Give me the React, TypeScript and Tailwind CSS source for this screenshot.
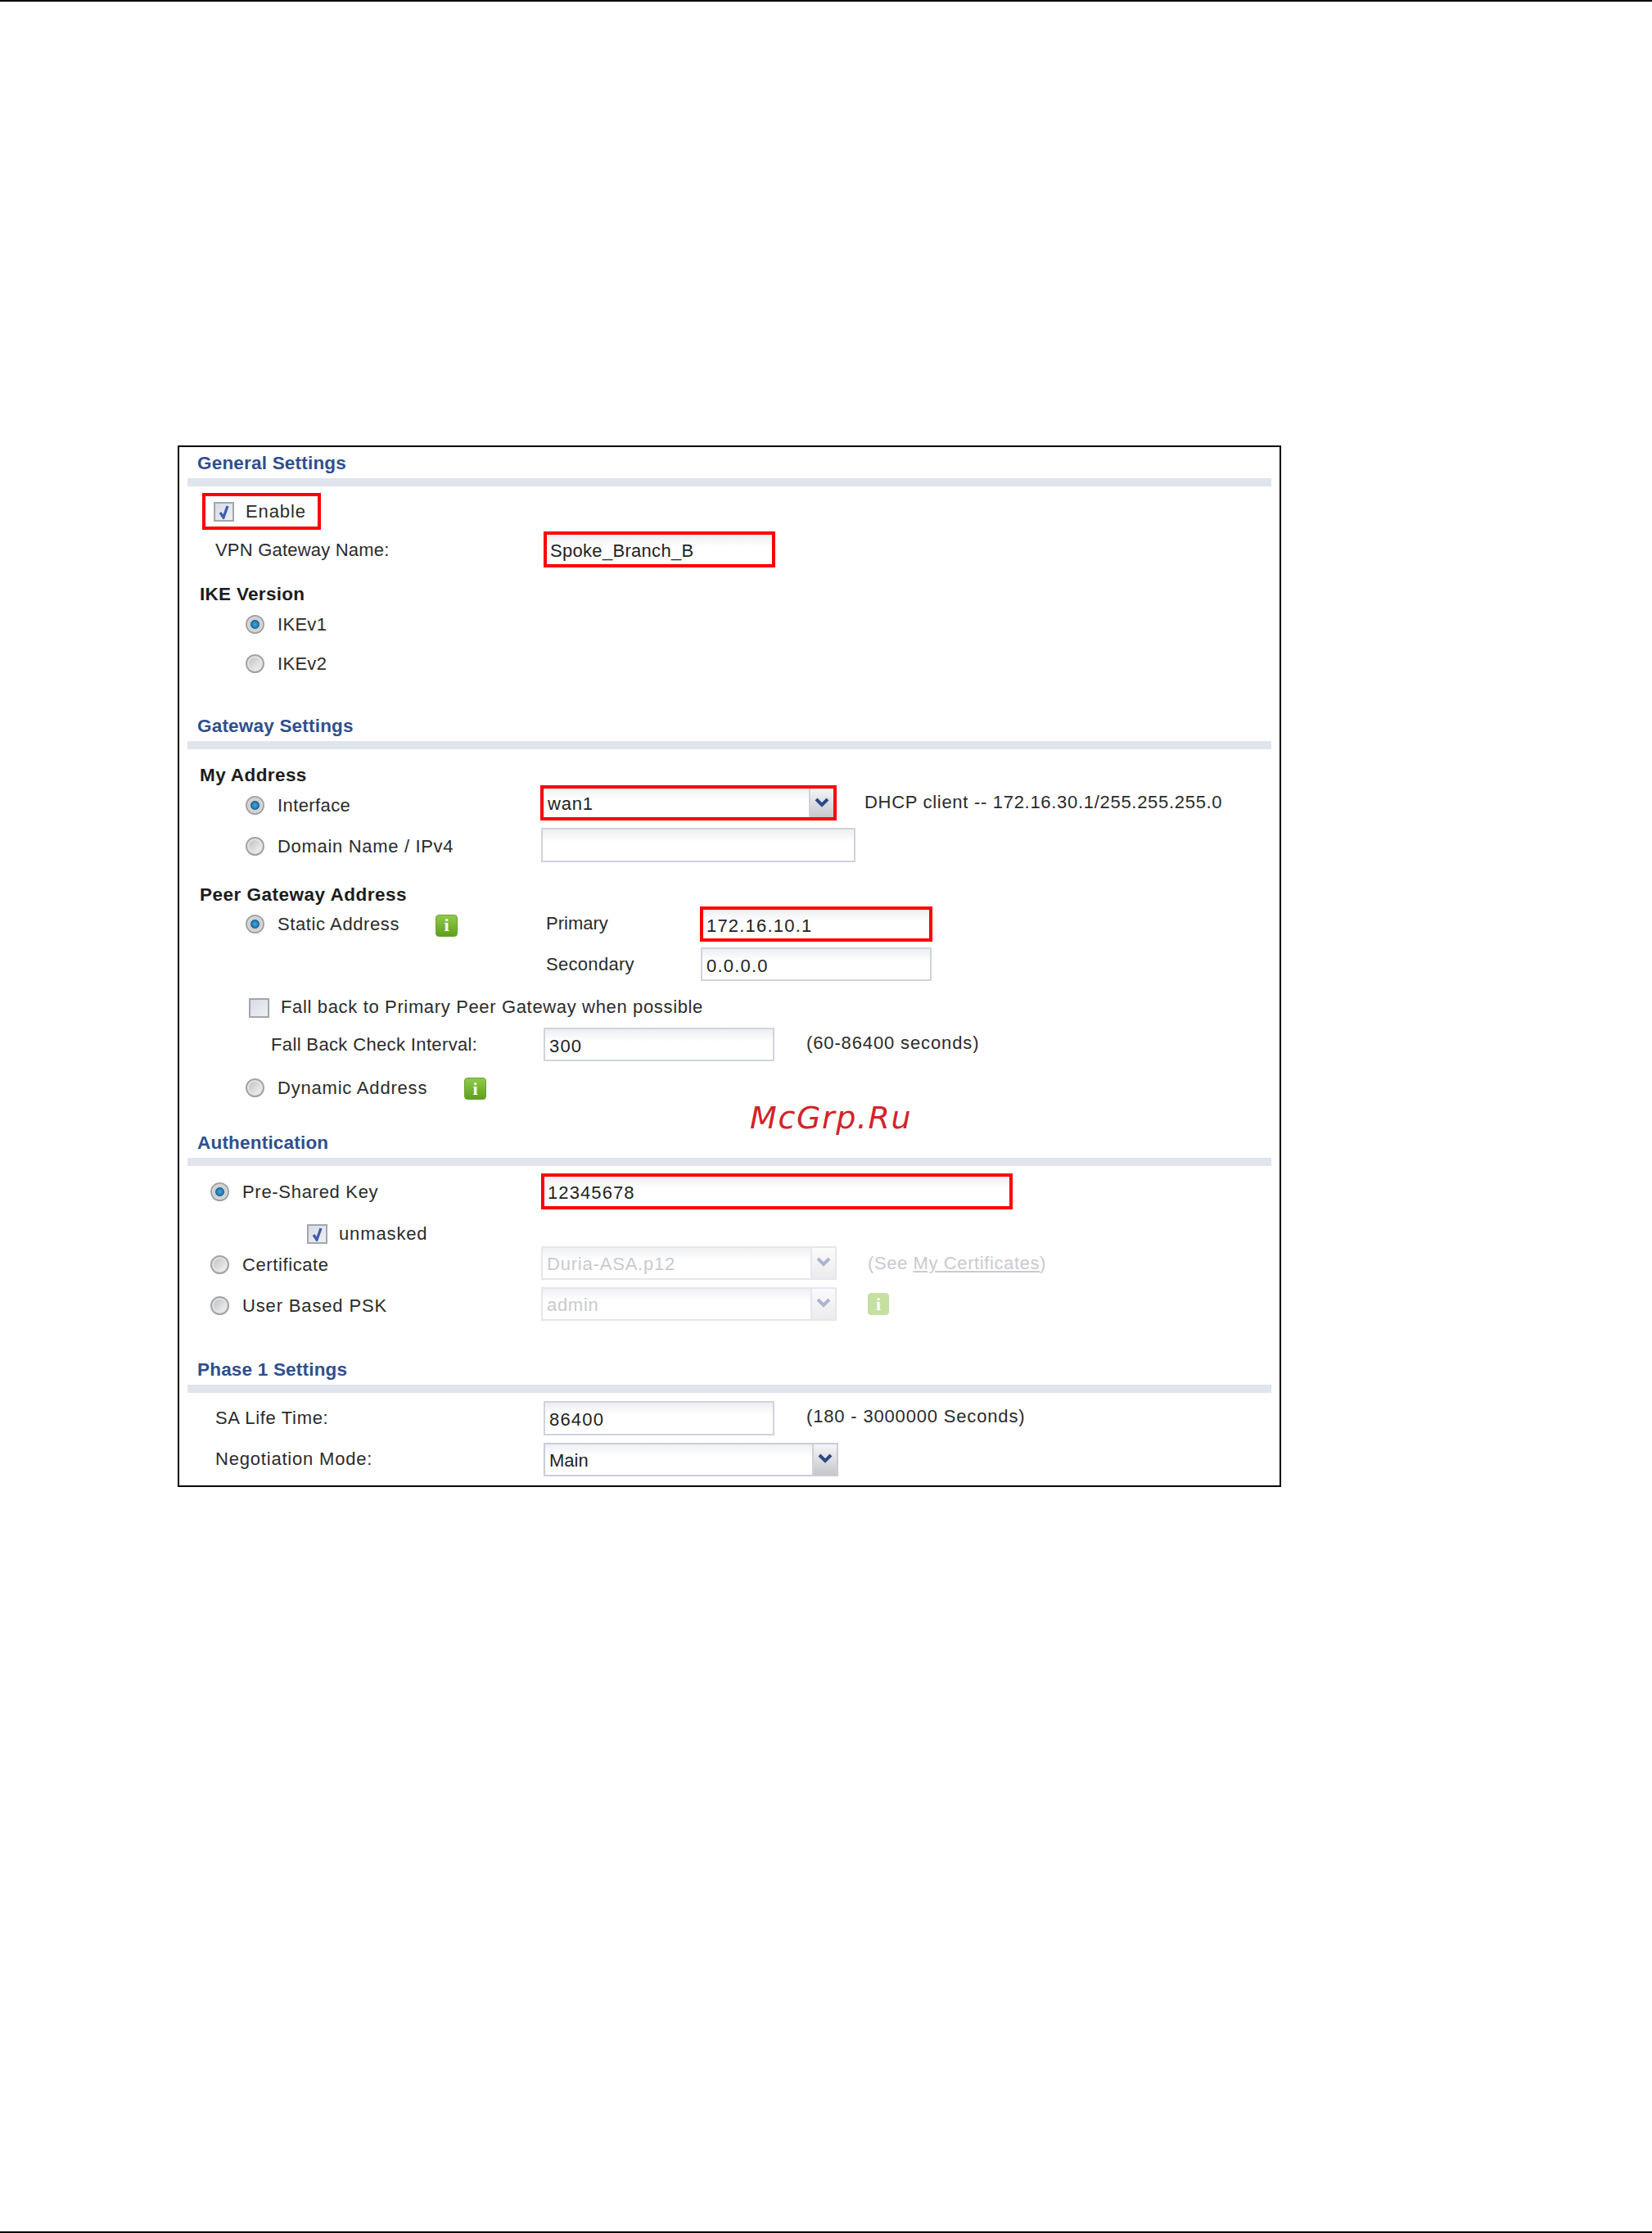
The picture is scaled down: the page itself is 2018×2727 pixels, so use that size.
import type { ReactNode } from "react"

function Radio({ checked = false }: { checked?: boolean }) {
  return (
    <span className="flex h-[23px] w-[23px] shrink-0 items-center justify-center rounded-full border-[2px] border-[#a1a4a6] bg-[#e4e4e5]">
      {checked ? (
        <span className="flex h-[17px] w-[17px] items-center justify-center rounded-full bg-[#cfd0d2]">
          <span className="h-[11px] w-[11px] rounded-full border border-[#174f78] bg-radial from-[#3fa6e0] to-[#0f659e]" />
        </span>
      ) : (
        <span className="h-[15px] w-[15px] rounded-full bg-linear-to-br from-[#bfc1c4] to-[#f4f4f5]" />
      )}
    </span>
  )
}

function Checkbox({ checked = false }: { checked?: boolean }) {
  return (
    <span className="flex h-[24px] w-[25px] shrink-0 items-center justify-center border-[2px] border-[#a3a6aa] bg-linear-to-br from-[#d9dce6] to-[#eef0f5]">
      {checked && (
        <svg width="14" height="18" viewBox="0 0 14 18" fill="none">
          <path d="M2 10 L6 16 L11 2" stroke="#3e5cab" strokeWidth="3.2" />
        </svg>
      )}
    </span>
  )
}

function InfoIcon({ faded = false }: { faded?: boolean }) {
  return (
    <span
      className={
        faded
          ? "flex h-[27px] w-[26px] shrink-0 items-center justify-center rounded-[4px] border border-[#c6dda8] bg-[#c5e09f] font-['Liberation_Serif',serif] text-[22px] leading-none font-bold text-white"
          : "flex h-[27px] w-[27px] shrink-0 items-center justify-center rounded-[4px] border border-[#6ba32c] bg-linear-to-b from-[#90c94a] to-[#5fa01e] font-['Liberation_Serif',serif] text-[22px] leading-none font-bold text-white"
      }
    >
      i
    </span>
  )
}

function Chevron({ color }: { color: string }) {
  return (
    <svg width="18" height="12" viewBox="0 0 18 12" fill="none">
      <path d="M2 2 L9 9 L16 2" stroke={color} strokeWidth="4" />
    </svg>
  )
}

function TextBox({
  value,
  width,
  red = false,
  tracking = "",
}: {
  value?: string
  width: string
  red?: boolean
  tracking?: string
}) {
  return (
    <div
      className={
        (red ? "border-[4px] border-[#ff0000] pl-[4px] " : "border-[2px] border-[#d0d3de] pl-[5px] ") +
        width +
        " " +
        tracking +
        " flex h-full shrink-0 items-center bg-linear-to-b from-[#eceef1] via-white via-40% to-white pt-[3px] text-[22px] text-[#222]"
      }
    >
      {value}
    </div>
  )
}

function SelectBox({
  value,
  width,
  red = false,
  disabled = false,
  tracking = "",
}: {
  value: string
  width: string
  red?: boolean
  disabled?: boolean
  tracking?: string
}) {
  const frame = red
    ? "border-[4px] border-[#ff0000] "
    : disabled
      ? "border-[2px] border-[#e6e7ee] "
      : "border-[2px] border-[#c9ccd9] "
  return (
    <div className={frame + width + " flex h-full shrink-0 bg-linear-to-b from-[#eef0f2] via-white via-40% to-white"}>
      <div
        className={
          (disabled ? "text-[#c9cad0] " : "text-[#222] ") +
          tracking +
          " flex min-w-0 flex-1 items-center pt-[2px] pl-[5px] text-[22px]"
        }
      >
        {value}
      </div>
      <div
        className={
          (disabled
            ? "border-[#e6e7ee] from-[#fbfbfc] to-[#ececee] "
            : "border-[#cfd1dc] from-[#f6f6f8] to-[#c6c7cb] ") +
          "flex w-[30px] shrink-0 justify-center border-l-[2px] bg-linear-to-b pt-[11px]"
        }
      >
        <Chevron color={disabled ? "#aab5cf" : "#2b4a86"} />
      </div>
    </div>
  )
}

function SectionHead({ title, className }: { title: string; className: string }) {
  return (
    <>
      <div className={className + " flex items-center pl-[12px] text-[22.5px] font-bold tracking-[0.2px] text-[#2f4f8e]"}>
        {title}
      </div>
      <div className="h-[10px] bg-[#e0e4ed]" />
    </>
  )
}

function SubHead({ children, className }: { children: ReactNode; className: string }) {
  return <div className={className + " flex items-center pl-[15px] text-[22.5px] font-bold text-[#1c1c1c]"}>{children}</div>
}

export default function App() {
  return (
    <div className="flex h-[2727px] w-[2018px] flex-col bg-white font-['Liberation_Sans',Arial,sans-serif] text-[22px] text-[#2b2b2b]">
      <div className="h-[2px] bg-black" />
      <div className="flex-1 pt-[542px] pl-[217px]">
        <div className="relative w-[1348px] border-[2px] border-black px-[10px] pt-[1px] pb-[11px]">
          <SectionHead title="General Settings" className="h-[37px]" />

          <div className="mt-[8px] flex h-[45px] pl-[18px]">
            <div className="flex w-[145px] items-center border-[4px] border-[#ff0000] pl-[10px]">
              <Checkbox checked />
              <span className="ml-[14px] tracking-[0.9px]">Enable</span>
            </div>
          </div>

          <div className="mt-[2px] flex h-[44px] items-center">
            <div className="w-[435px] shrink-0 pl-[34px] tracking-[0.2px]">VPN Gateway Name:</div>
            <TextBox value="Spoke_Branch_B" width="w-[283px]" red tracking="tracking-[0.3px]" />
          </div>

          <SubHead className="mt-[15px] h-[36px] tracking-[0.3px]">IKE Version</SubHead>
          <div className="flex h-[37px] items-center gap-[16px] pl-[71px] tracking-[0.3px]">
            <Radio checked />
            <span>IKEv1</span>
          </div>
          <div className="flex h-[58px] items-center gap-[16px] pl-[71px] tracking-[0.3px]">
            <Radio />
            <span>IKEv2</span>
          </div>

          <SectionHead title="Gateway Settings" className="mt-[30px] h-[36px]" />

          <SubHead className="h-[44px] pt-[20px] tracking-[0.4px]">My Address</SubHead>
          <div className="flex h-[43px] items-center">
            <div className="flex w-[431px] shrink-0 items-center gap-[16px] pt-[5px] pl-[71px] tracking-[0.4px]">
              <Radio checked />
              <span>Interface</span>
            </div>
            <SelectBox value="wan1" width="w-[362px]" red tracking="tracking-[0.8px]" />
            <span className="ml-[34px] pb-[3px] tracking-[0.7px]">DHCP client -- 172.16.30.1/255.255.255.0</span>
          </div>
          <div className="mt-[9px] flex h-[42px] items-center">
            <div className="flex w-[432px] shrink-0 items-center gap-[16px] pt-[2px] pl-[71px] tracking-[0.68px]">
              <Radio />
              <span>Domain Name / IPv4</span>
            </div>
            <TextBox width="w-[384px]" />
          </div>

          <SubHead className="h-[54px] pt-[26px] tracking-[0.5px]">Peer Gateway Address</SubHead>
          <div className="flex h-[43px] items-center">
            <div className="flex w-[438px] shrink-0 items-center pl-[71px]">
              <Radio checked />
              <span className="ml-[16px] w-[193px] tracking-[0.6px]">Static Address</span>
              <span className="pt-[3px]">
                <InfoIcon />
              </span>
            </div>
            <span className="w-[188px] shrink-0 pb-[2px]">Primary</span>
            <TextBox value="172.16.10.1" width="w-[284px]" red tracking="tracking-[1.2px]" />
          </div>
          <div className="mt-[7px] flex h-[41px] items-center pl-[438px]">
            <span className="w-[189px] shrink-0 tracking-[0.3px]">Secondary</span>
            <TextBox value="0.0.0.0" width="w-[282px]" tracking="tracking-[1.2px]" />
          </div>

          <div className="mt-[20px] flex h-[25px] items-center pl-[75px]">
            <Checkbox />
            <span className="ml-[14px] pb-[2px] tracking-[0.65px]">Fall back to Primary Peer Gateway when possible</span>
          </div>

          <div className="mt-[12px] flex h-[41px] items-center">
            <div className="w-[435px] shrink-0 pl-[102px] tracking-[0.36px]">Fall Back Check Interval:</div>
            <TextBox value="300" width="w-[282px]" tracking="tracking-[1.2px]" />
            <span className="ml-[39px] pb-[5px] tracking-[0.87px]">(60-86400 seconds)</span>
          </div>

          <div className="mt-[20px] flex h-[27px] items-center pl-[71px]">
            <span className="pb-[2px]">
              <Radio />
            </span>
            <span className="ml-[16px] w-[228px] pb-[2px] tracking-[0.8px]">Dynamic Address</span>
            <InfoIcon />
          </div>

          <SectionHead title="Authentication" className="mt-[35px] h-[36px]" />

          <div className="mt-[9px] flex h-[44px] items-center">
            <div className="flex w-[432px] shrink-0 items-center gap-[16px] pl-[28px] tracking-[0.7px]">
              <Radio checked />
              <span>Pre-Shared Key</span>
            </div>
            <TextBox value="12345678" width="w-[576px]" red tracking="tracking-[1.1px]" />
          </div>

          <div className="mt-[18px] flex h-[24px] items-center pl-[146px]">
            <Checkbox checked />
            <span className="ml-[14px] pb-[2px] tracking-[0.87px]">unmasked</span>
          </div>

          <div className="mt-[3px] flex h-[41px] items-center">
            <div className="flex w-[432px] shrink-0 items-center gap-[16px] pt-[3px] pl-[28px] tracking-[0.6px]">
              <Radio />
              <span>Certificate</span>
            </div>
            <SelectBox value="Duria-ASA.p12" width="w-[361px]" disabled tracking="tracking-[0.8px]" />
            <span className="ml-[38px] text-[#c9cad0] tracking-[0.6px]">
              (See <span className="underline">My Certificates</span>)
            </span>
          </div>

          <div className="mt-[9px] flex h-[41px] items-center">
            <div className="flex w-[432px] shrink-0 items-center gap-[16px] pt-[3px] pl-[28px] tracking-[0.85px]">
              <Radio />
              <span>User Based PSK</span>
            </div>
            <SelectBox value="admin" width="w-[361px]" disabled tracking="tracking-[0.7px]" />
            <span className="ml-[38px]">
              <InfoIcon faded />
            </span>
          </div>

          <SectionHead title="Phase 1 Settings" className="mt-[42px] h-[36px]" />

          <div className="mt-[10px] flex h-[42px] items-center">
            <div className="w-[435px] shrink-0 pb-[2px] pl-[34px] tracking-[0.67px]">SA Life Time:</div>
            <TextBox value="86400" width="w-[282px]" tracking="tracking-[1.2px]" />
            <span className="ml-[39px] pb-[5px] tracking-[0.83px]">(180 - 3000000 Seconds)</span>
          </div>

          <div className="mt-[9px] flex h-[41px] items-center">
            <div className="w-[435px] shrink-0 pb-[2px] pl-[34px] tracking-[0.8px]">Negotiation Mode:</div>
            <SelectBox value="Main" width="w-[360px]" />
          </div>

          {/* watermark sits over the form */}
          <div className="absolute top-[800px] left-[697px] font-['DejaVu_Sans',sans-serif] text-[38px] leading-none tracking-[1.6px] text-[#d2232a] italic">
            McGrp.Ru
          </div>
        </div>
      </div>
      <div className="h-[2px] bg-black" />
    </div>
  )
}
